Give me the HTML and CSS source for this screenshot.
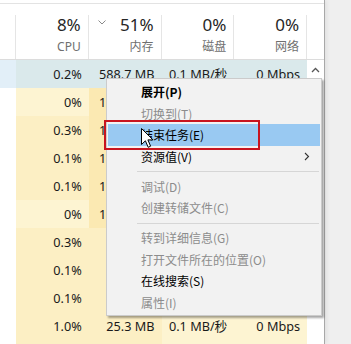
FILE: index.html
```html
<!DOCTYPE html>
<html lang="zh-CN">

<head>
    <meta charset="UTF-8">
    <meta name="viewport" content="width=device-width, initial-scale=1.0">
    <title>任务管理器 - 进程</title>
    <link rel="stylesheet" href="styles.css">
</head>

<body>
    <div class="screen">
        <div class="window">
            <div class="header">
                <div class="hcell name"></div>
                <div class="hcell">
                    <div class="pct-row"><span class="pct">8%</span></div>
                    <span class="label">CPU</span>
                </div>
                <div class="hcell">
                    <div class="pct-row">
                        <svg class="sort" width="8" height="5" viewBox="0 0 8 5"><path d="M0.5 0.5 L4 4 L7.5 0.5" fill="none" stroke="#8a8a8a" stroke-width="1"/></svg>
                        <span class="pct">51%</span>
                    </div>
                    <span class="label">内存</span>
                </div>
                <div class="hcell">
                    <div class="pct-row"><span class="pct">0%</span></div>
                    <span class="label">磁盘</span>
                </div>
                <div class="hcell">
                    <div class="pct-row"><span class="pct">0%</span></div>
                    <span class="label">网络</span>
                </div>
                <div class="hcell scroll"></div>
            </div>

            <div class="rows">
                <div class="row selected">
                    <div class="cell name"></div>
                    <div class="cell">0.2%</div>
                    <div class="cell">588.7 MB</div>
                    <div class="cell">0.1 MB/秒</div>
                    <div class="cell">0 Mbps</div>
                    <div class="cell scroll">
                        <svg width="9" height="6" viewBox="0 0 9 6"><path d="M1 5 L4.5 1.5 L8 5" fill="none" stroke="#555" stroke-width="1.3"/></svg>
                    </div>
                </div>
                <div class="row">
                    <div class="cell name"></div>
                    <div class="cell lo">0%</div>
                    <div class="cell hi">132.5 MB</div>
                    <div class="cell lo"></div>
                    <div class="cell lo"></div>
                    <div class="cell scroll"></div>
                </div>
                <div class="row">
                    <div class="cell name"></div>
                    <div class="cell mid">0.3%</div>
                    <div class="cell hi">118.0 MB</div>
                    <div class="cell lo"></div>
                    <div class="cell lo"></div>
                    <div class="cell scroll"></div>
                </div>
                <div class="row">
                    <div class="cell name"></div>
                    <div class="cell mid">0.1%</div>
                    <div class="cell hi">105.9 MB</div>
                    <div class="cell lo"></div>
                    <div class="cell lo"></div>
                    <div class="cell scroll"></div>
                </div>
                <div class="row">
                    <div class="cell name"></div>
                    <div class="cell mid">0.1%</div>
                    <div class="cell hi">101.2 MB</div>
                    <div class="cell lo"></div>
                    <div class="cell lo"></div>
                    <div class="cell scroll"></div>
                </div>
                <div class="row">
                    <div class="cell name"></div>
                    <div class="cell lo">0%</div>
                    <div class="cell hi">100.4 MB</div>
                    <div class="cell lo"></div>
                    <div class="cell lo"></div>
                    <div class="cell scroll"></div>
                </div>
                <div class="row">
                    <div class="cell name"></div>
                    <div class="cell mid">0.3%</div>
                    <div class="cell mid"></div>
                    <div class="cell lo"></div>
                    <div class="cell lo"></div>
                    <div class="cell scroll"></div>
                </div>
                <div class="row">
                    <div class="cell name"></div>
                    <div class="cell mid">0.1%</div>
                    <div class="cell mid"></div>
                    <div class="cell lo"></div>
                    <div class="cell lo"></div>
                    <div class="cell scroll"></div>
                </div>
                <div class="row">
                    <div class="cell name"></div>
                    <div class="cell mid">0.1%</div>
                    <div class="cell mid"></div>
                    <div class="cell lo"></div>
                    <div class="cell lo"></div>
                    <div class="cell scroll"></div>
                </div>
                <div class="row">
                    <div class="cell name"></div>
                    <div class="cell mid">1.0%</div>
                    <div class="cell mid">25.3 MB</div>
                    <div class="cell lo">0.1 MB/秒</div>
                    <div class="cell lo">0 Mbps</div>
                    <div class="cell scroll"></div>
                </div>
                <div class="row">
                    <div class="cell name"></div>
                    <div class="cell mid"></div>
                    <div class="cell mid"></div>
                    <div class="cell lo"></div>
                    <div class="cell lo"></div>
                    <div class="cell scroll"></div>
                </div>
            </div>
        </div>

        <!-- context menu over the process list -->
        <div class="menu">
            <div class="item bold">展开(P)</div>
            <div class="item disabled">切换到(T)</div>
            <div class="item active">结束任务(E)</div>
            <div class="item">
                <span>资源值(V)</span>
                <svg width="6" height="9" viewBox="0 0 6 9"><path d="M1 1 L4.5 4.5 L1 8" fill="none" stroke="#333" stroke-width="1.1"/></svg>
            </div>
            <div class="sep"></div>
            <div class="item disabled">调试(D)</div>
            <div class="item disabled">创建转储文件(C)</div>
            <div class="sep"></div>
            <div class="item disabled">转到详细信息(G)</div>
            <div class="item disabled">打开文件所在的位置(O)</div>
            <div class="item">在线搜索(S)</div>
            <div class="item disabled">属性(I)</div>
        </div>

        <div class="callout"></div>

        <svg class="cursor" width="13" height="21" viewBox="0 0 13 21">
            <path d="M0.5 0.5 V16.5 L4.4 12.8 L7.2 19.3 L9.6 18.2 L6.9 11.9 H12 Z" fill="#fff" stroke="#000" stroke-width="1" stroke-linejoin="round"/>
        </svg>
    </div>
</body>

</html>
```

FILE: styles.css
```css
body {
    margin: 0;
    padding: 0;
    background: #efefef;
    font-family: "Noto Sans", "Noto Sans CJK SC", sans-serif;
    color: #1a1a1a;
    overflow: hidden;
}

.screen {
    position: relative;
    width: 351px;
    height: 344px;
    overflow: hidden;
}

.window {
    width: 325px;
    height: 344px;
    padding-top: 3px;
    box-sizing: border-box;
    background: #fff;
    border-right: 1px solid #a8a8a8;
    box-shadow: 2px 0 4px rgba(0, 0, 0, 0.06);
}

/* header */

.header {
    display: flex;
    height: 57px;
    box-sizing: border-box;
    border-top: 1px solid #e3e3e3;
    border-bottom: 1px solid #dcdcdc;
}

.hcell {
    width: 73px;
    margin-top: 11px;
    box-sizing: border-box;
    border-right: 1px solid #e5e5e5;
    padding-right: 7px;
    display: flex;
    flex-direction: column;
    align-items: flex-end;
}

.hcell.name {
    width: 16px;
    padding: 0;
}

.hcell.scroll {
    width: 17px;
    border-right: none;
    padding: 0;
}

.pct-row {
    align-self: stretch;
    display: flex;
    justify-content: space-between;
    align-items: flex-start;
}

.pct-row .pct {
    margin-left: auto;
}

.sort {
    margin: 5px 0 0 9px;
}

.pct {
    font-size: 17px;
    line-height: 19px;
    color: #262626;
}

.label {
    margin-top: 5px;
    font-size: 12px;
    line-height: 16px;
    color: #6f6f6f;
}

/* rows */

.row {
    display: flex;
    height: 28px;
}

.cell {
    width: 73px;
    box-sizing: border-box;
    padding-right: 7px;
    text-align: right;
    font-size: 12.7px;
    line-height: 28px;
    white-space: nowrap;
    overflow: hidden;
}

.cell.name {
    width: 16px;
    padding: 0;
    background: #fff;
}

.cell.scroll {
    width: 17px;
    padding: 0;
    background: #fff;
    display: flex;
    justify-content: center;
    align-items: flex-start;
    padding-top: 7px;
}

.cell.lo {
    background: #fdf4d2;
}

.cell.mid {
    background: #fcefc4;
}

.cell.hi {
    background: #fbe9b2;
}

.row.selected .cell {
    background: #dae9eb;
}

.row.selected .cell.name {
    background: #e2eff8;
}

.row.selected .cell.scroll {
    background: #fff;
}

/* context menu */

.menu {
    position: absolute;
    left: 106px;
    top: 78px;
    width: 216px;
    box-sizing: border-box;
    padding: 2px 1px;
    background: #f2f2f2;
    border: 1px solid #cbcbcb;
    box-shadow: 2px 2px 2px rgba(0, 0, 0, 0.35);
    font-family: "Noto Sans CJK SC", "Noto Sans", sans-serif;
    font-size: 12px;
    color: #000;
}

.item {
    height: 21.5px;
    line-height: 21.5px;
    padding: 0 10px 0 33px;
    display: flex;
    justify-content: space-between;
    align-items: center;
}

.item.bold {
    font-weight: bold;
}

.item.disabled {
    color: #8c8c8c;
}

.item.active {
    background: #99c9f2;
}

.sep {
    height: 1px;
    margin: 4px 1px 3.5px 29px;
    background: #d6d6d6;
}

.callout {
    position: absolute;
    left: 104px;
    top: 120px;
    width: 156px;
    height: 30px;
    box-sizing: border-box;
    border: 2px solid #c8141f;
}

.cursor {
    position: absolute;
    left: 141px;
    top: 128px;
}
```
